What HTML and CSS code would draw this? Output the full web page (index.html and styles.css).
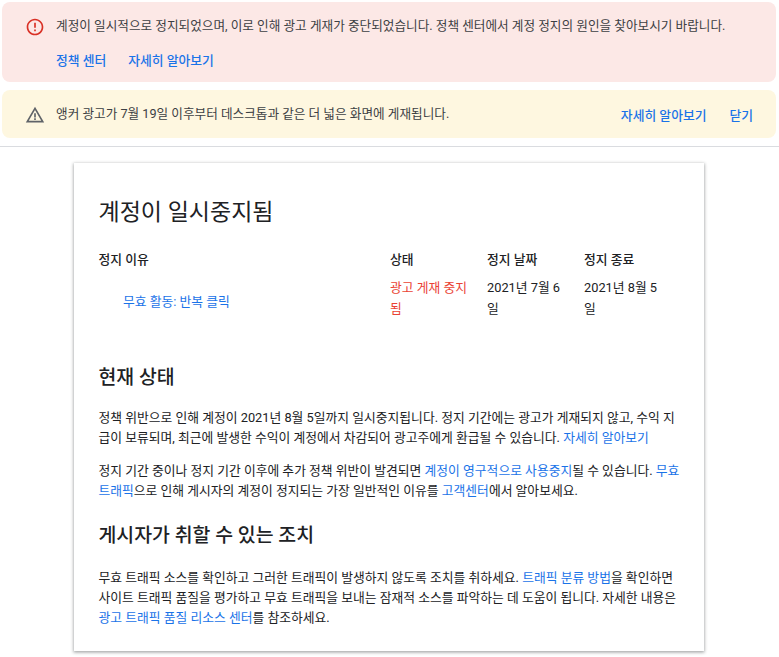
FILE: index.html
```html
<!DOCTYPE html>
<html lang="ko">
<head>
<meta charset="utf-8">
<title>계정이 일시중지됨</title>
<link rel="stylesheet" href="styles.css">
</head>
<body>
<div class="banners">
  <div class="banner banner-error">
    <div class="banner-row">
      <svg class="icon" viewBox="0 0 24 24" width="20" height="20"><path fill="#d93025" d="M11 15h2v2h-2zm0-8h2v6h-2zm.99-5C6.47 2 2 6.48 2 12s4.47 10 9.99 10C17.52 22 22 17.52 22 12S17.52 2 11.99 2zM12 20c-4.42 0-8-3.58-8-8s3.58-8 8-8 8 3.58 8 8-3.58 8-8 8z"/></svg>
      <span class="banner-text">계정이 일시적으로 정지되었으며, 이로 인해 광고 게재가 중단되었습니다. 정책 센터에서 계정 정지의 원인을 찾아보시기 바랍니다.</span>
    </div>
    <div class="banner-actions">
      <a class="action">정책 센터</a>
      <a class="action">자세히 알아보기</a>
    </div>
  </div>
  <div class="banner banner-warn">
    <svg class="icon" viewBox="0 0 24 24" width="20" height="20"><path fill="#5f6368" d="M1 21h22L12 2 1 21zm3.47-2L12 6l7.53 13H4.47zM11 16h2v2h-2zm0-6h2v5h-2z"/></svg>
    <span class="banner-text grow">앵커 광고가 7월 19일 이후부터 데스크톱과 같은 더 넓은 화면에 게재됩니다.</span>
    <a class="action">자세히 알아보기</a>
    <a class="action">닫기</a>
  </div>
</div>
<hr class="divider">
<main class="card">
  <h1 class="title">계정이 일시중지됨</h1>
  <div class="table">
    <div class="th">정지 이유</div>
    <div class="th">상태</div>
    <div class="th">정지 날짜</div>
    <div class="th">정지 종료</div>
    <div class="td reason"><a class="link">무효 활동: 반복 클릭</a></div>
    <div class="td status">광고 게재 중지됨</div>
    <div class="td">2021년 7월 6일</div>
    <div class="td">2021년 8월 5일</div>
  </div>
  <h2 class="heading status-heading">현재 상태</h2>
  <p class="para">정책 위반으로 인해 계정이 2021년 8월 5일까지 일시중지됩니다. 정지 기간에는 광고가 게재되지 않고, 수익 지급이 보류되며, 최근에 발생한 수익이 계정에서 차감되어 광고주에게 환급될 수 있습니다. <a class="link">자세히 알아보기</a></p>
  <p class="para">정지 기간 중이나 정지 기간 이후에 추가 정책 위반이 발견되면 <a class="link">계정이 영구적으로 사용중지</a>될 수 있습니다. <a class="link">무효 트래픽</a>으로 인해 게시자의 계정이 정지되는 가장 일반적인 이유를 <a class="link">고객센터</a>에서 알아보세요.</p>
  <h2 class="heading action-heading">게시자가 취할 수 있는 조치</h2>
  <p class="para">무효 트래픽 소스를 확인하고 그러한 트래픽이 발생하지 않도록 조치를 취하세요. <a class="link">트래픽 분류 방법</a>을 확인하면 사이트 트래픽 품질을 평가하고 무효 트래픽을 보내는 잠재적 소스를 파악하는 데 도움이 됩니다. 자세한 내용은 <a class="link">광고 트래픽 품질 리소스 센터</a>를 참조하세요.</p>
</main>
</body>
</html>
```
FILE: styles.css
```css
* { box-sizing: border-box; }
html, body { margin: 0; padding: 0; background: #fff; }
body {
  font-family: Roboto, "Noto Sans CJK KR", sans-serif;
  font-size: 12.8px;
  line-height: 20px;
  color: #202124;
  height: 657px;
  overflow: hidden;
}
.banners { display: flex; flex-direction: column; gap: 8px; padding: 2px 3px 0 2px; }
.banner { border-radius: 8px; padding: 0 23px; }
.banner-error { background: #fce8e6; height: 80px; padding-top: 15px; }
.banner-warn { background: #fef7e0; height: 48px; display: flex; align-items: center; gap: 23px; }
.banner-row { display: flex; align-items: center; }
.icon { flex: none; margin-right: 11px; }
.banner-warn .icon { margin: 2px -12px 0 0; }
.banner-text { color: #3c4043; font-size: 12.65px; }
.banner-row .banner-text { margin-top: -2px; }
.banner-warn .banner-text { margin-top: 0; }
.grow { flex: 1; }
.banner-warn .action { margin-top: 4px; }
.banner-actions { display: flex; gap: 22px; margin: 14px 0 0 31px; }
.action { color: #1a73e8; font-weight: 500; font-size: 12.8px; }
.divider { border: 0; border-top: 1px solid #dadce0; margin: 8px 0 16px; }
.card {
  width: 630px;
  height: 488px;
  margin-left: 74px;
  padding: 34px 24px 0 24.5px;
  background: #fff;
  box-shadow: 0 1px 3px rgba(60, 64, 67, .4), 0 1px 3px 1px rgba(60, 64, 67, .15);
}
.title { margin: 0; font-size: 23px; line-height: 32px; font-weight: 400; color: #202124; }
.table { display: grid; grid-template-columns: 291.5px 97px 97px 97px; margin-top: 21px; }
.th { font-weight: 500; color: #202124; line-height: 20px; padding-bottom: 7px; }
.td { line-height: 21px; padding-right: 14px; }
.reason { padding: 6px 0 0 24.5px; align-self: center; }
.status { color: #ea4335; }
.heading { margin: 0; font-size: 19.4px; line-height: 28px; font-weight: 500; }
.status-heading { margin-top: 45px; }
.action-heading { margin-top: 21px; padding-bottom: 1px; }
.heading + .para { margin-top: 17px; }
.status-heading + .para { margin-top: 16px; }
.para { margin: 13px 0 0; }
.link { color: #1a73e8; }
```
